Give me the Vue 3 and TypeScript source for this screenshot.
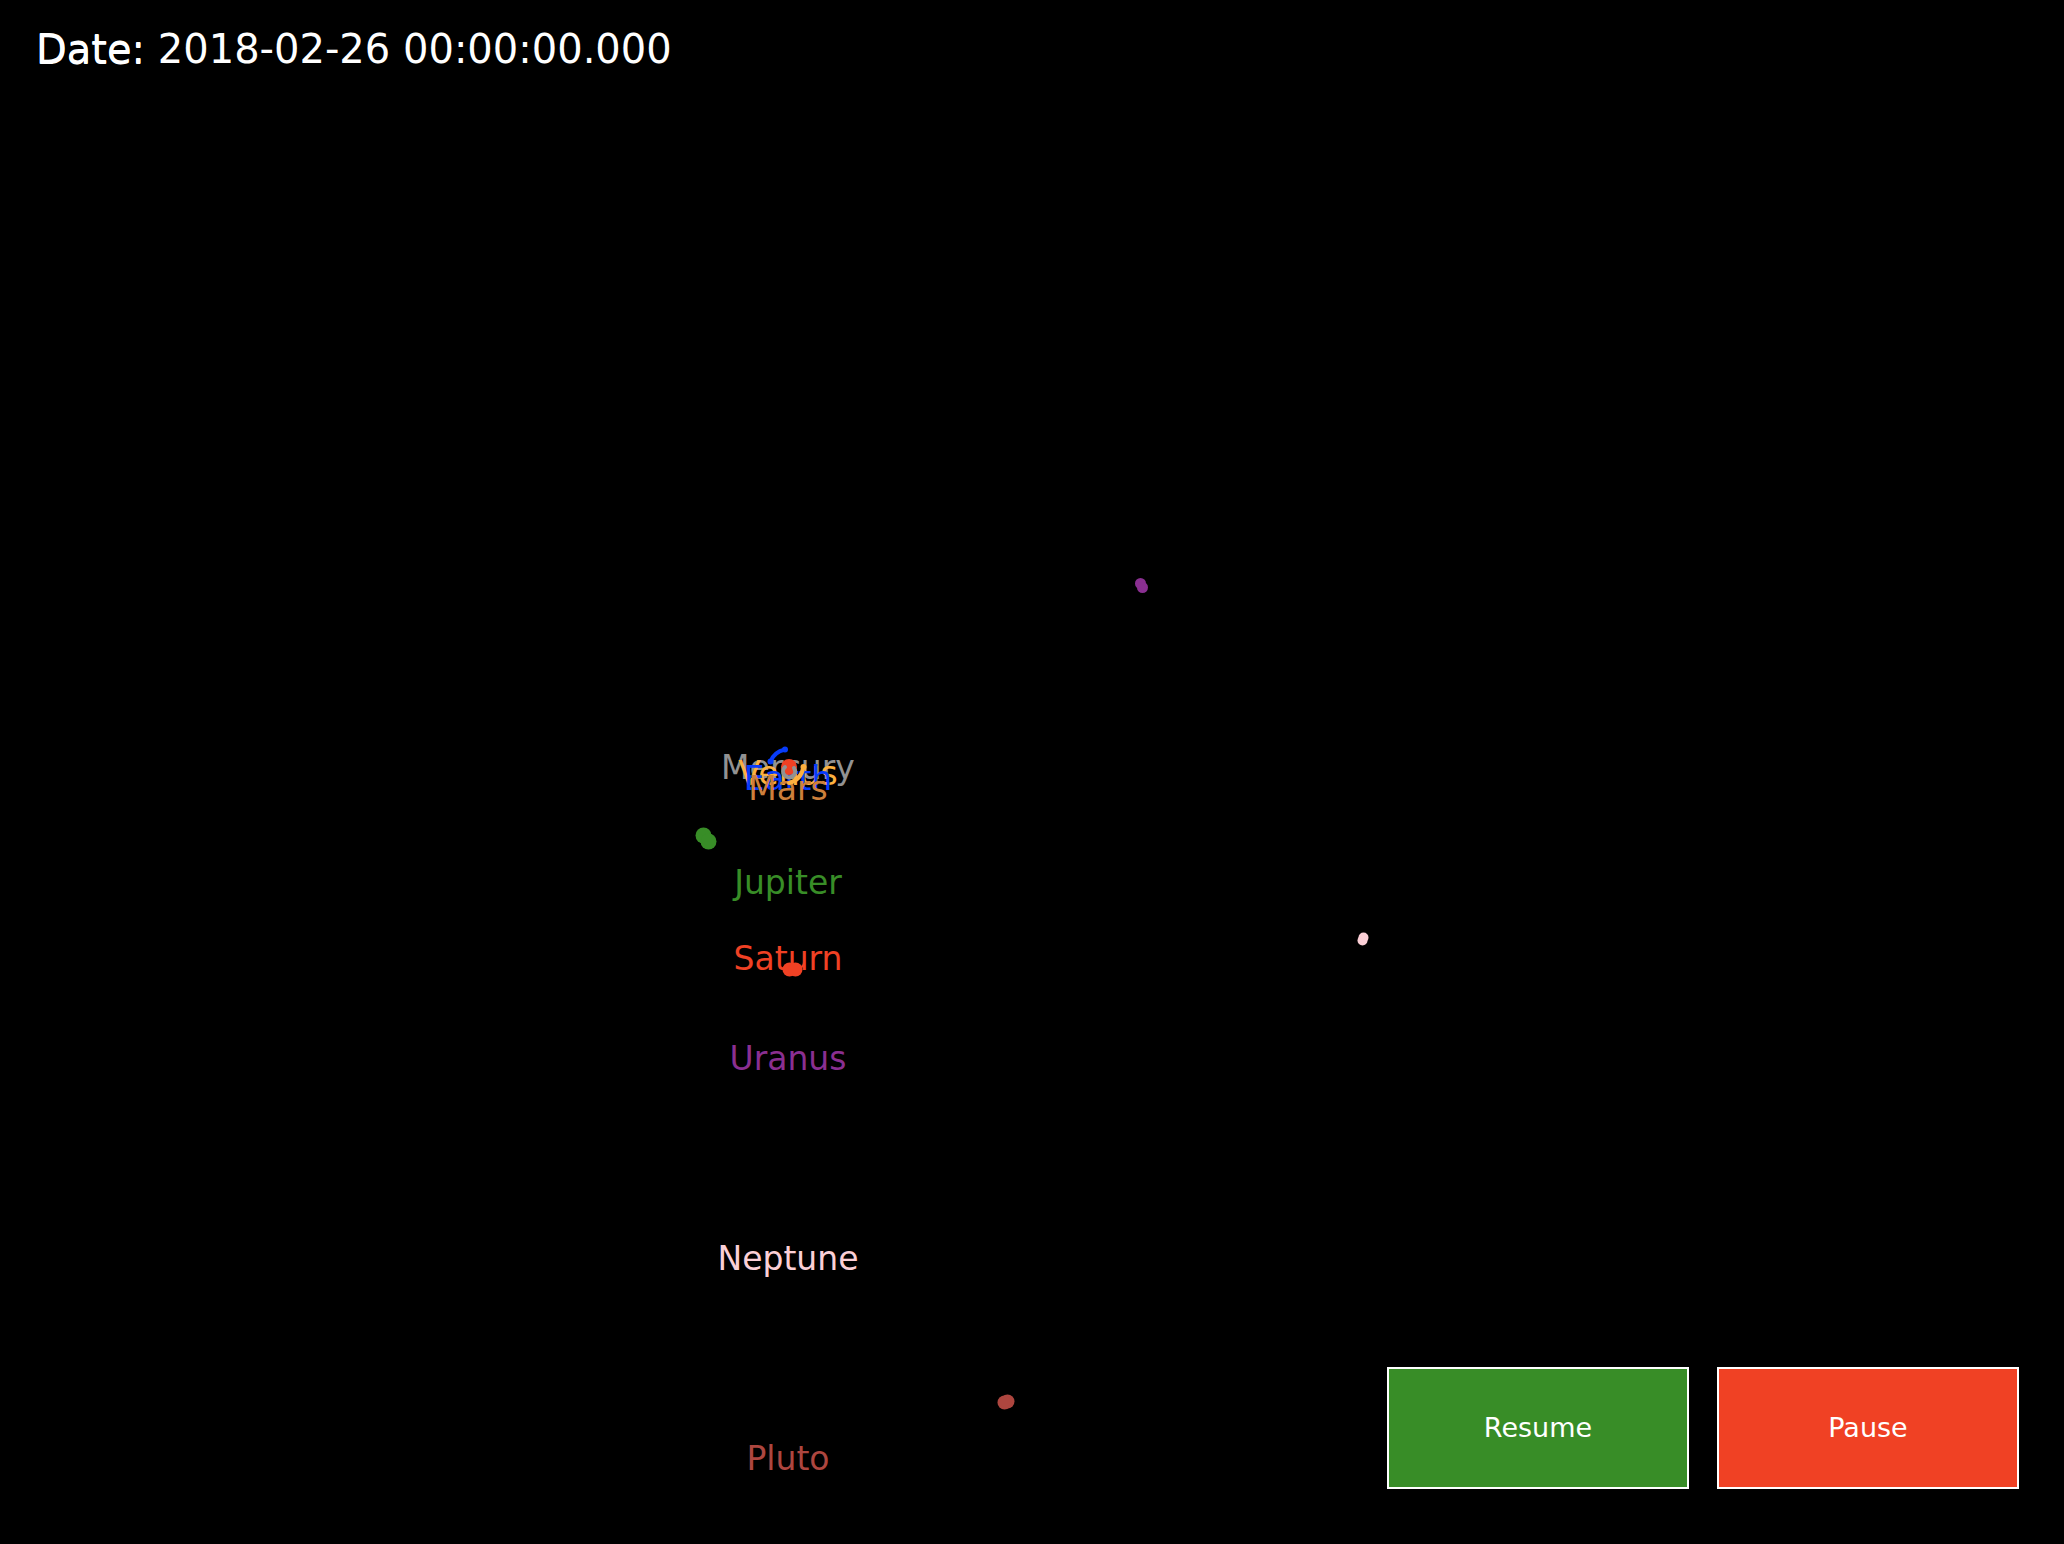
<script setup lang="ts">
import { ref } from 'vue'

interface Label {
  name: string
  y: number
  color: string
}

interface Dot {
  x: number
  y: number
  r: number
  color: string
}

const date = ref('2018-02-26 00:00:00.000')
const running = ref(false)

const labels: Label[] = [
  { name: 'Mercury', y: 779, color: '#929292' },
  { name: 'Venus', y: 785, color: '#fcb03f' },
  { name: 'Earth', y: 790, color: '#083cfb' },
  { name: 'Mars', y: 800, color: '#cd7f3b' },
  { name: 'Jupiter', y: 894, color: '#388d27' },
  { name: 'Saturn', y: 970, color: '#f04124' },
  { name: 'Uranus', y: 1070, color: '#8a2f91' },
  { name: 'Neptune', y: 1270, color: '#fbcfd6' },
  { name: 'Pluto', y: 1470, color: '#ad463f' },
]

const dots: Dot[] = [
  { x: 703.5, y: 835.5, r: 8, color: '#388d27' },
  { x: 708.5, y: 841.5, r: 8, color: '#388d27' },
  { x: 789.5, y: 969.5, r: 7, color: '#f04124' },
  { x: 795.5, y: 969.5, r: 7, color: '#f04124' },
  { x: 1140.5, y: 583.5, r: 5.5, color: '#8a2f91' },
  { x: 1142.5, y: 587.5, r: 5.5, color: '#8a2f91' },
  { x: 1363.5, y: 937.5, r: 5, color: '#fbcfd6' },
  { x: 1362.5, y: 940.5, r: 5, color: '#fbcfd6' },
  { x: 1007.5, y: 1401.5, r: 7, color: '#ad463f' },
  { x: 1004.5, y: 1402.5, r: 7, color: '#ad463f' },
]
</script>

<template>
  <main class="page">
    <svg class="space" viewBox="0 0 2064 1544" role="img" aria-label="Planet positions">
      <text v-for="l in labels" :key="l.name" class="name" x="788" :y="l.y" :fill="l.color">{{ l.name }}</text>
      <circle cx="789" cy="767" r="8" fill="#f04124" />
      <g fill="none" stroke-linecap="round">
        <path d="M785 767A6 6 0 1 0 794 768" stroke="#929292" stroke-width="4" />
        <path d="M803.5 767Q801 780 789 783" stroke="#fcb03f" stroke-width="4" />
        <path d="M770.5 761.5Q774 752 785 749.5" stroke="#083cfb" stroke-width="4" />
      </g>
      <circle cx="803.5" cy="767" r="3" fill="#fcb03f" />
      <circle cx="770.5" cy="761.5" r="3" fill="#083cfb" />
      <circle cx="785" cy="749.5" r="3" fill="#083cfb" />
      <circle v-for="(d, i) in dots" :key="i" :cx="d.x" :cy="d.y" :r="d.r" :fill="d.color" />
    </svg>
    <header class="date"><span class="caption">Date:</span> {{ date }}</header>
    <footer class="controls">
      <button type="button" class="resume" @click="running = true">Resume</button>
      <button type="button" class="pause" @click="running = false">Pause</button>
    </footer>
  </main>
</template>

<style>
body {
  background: #000;
}
</style>

<style scoped>
.page {
  position: relative;
  box-sizing: border-box;
  min-height: 100vh;
  display: flex;
  flex-direction: column;
  justify-content: space-between;
  padding: 25px 45px 55px 36px;
  background: #000;
  color: #fff;
  font-family: "DejaVu Sans", sans-serif;
}
.space {
  position: absolute;
  inset: 0;
  width: 100%;
  height: 100%;
}
.name {
  font-size: 33px;
  text-anchor: middle;
}
.date {
  position: relative;
  font-size: 40px;
  line-height: 48px;
}
.caption {
  text-shadow: 0 1px 0 #fff;
}
.controls {
  position: relative;
  display: flex;
  justify-content: flex-end;
  gap: 28px;
}
button {
  box-sizing: border-box;
  width: 302px;
  height: 122px;
  padding: 0 0 2px;
  border: 2px solid #fff;
  border-radius: 0;
  color: #fff;
  font-family: inherit;
  font-size: 27px;
  cursor: pointer;
}
.resume {
  background: #388d27;
}
.pause {
  background: #f04124;
}
</style>
